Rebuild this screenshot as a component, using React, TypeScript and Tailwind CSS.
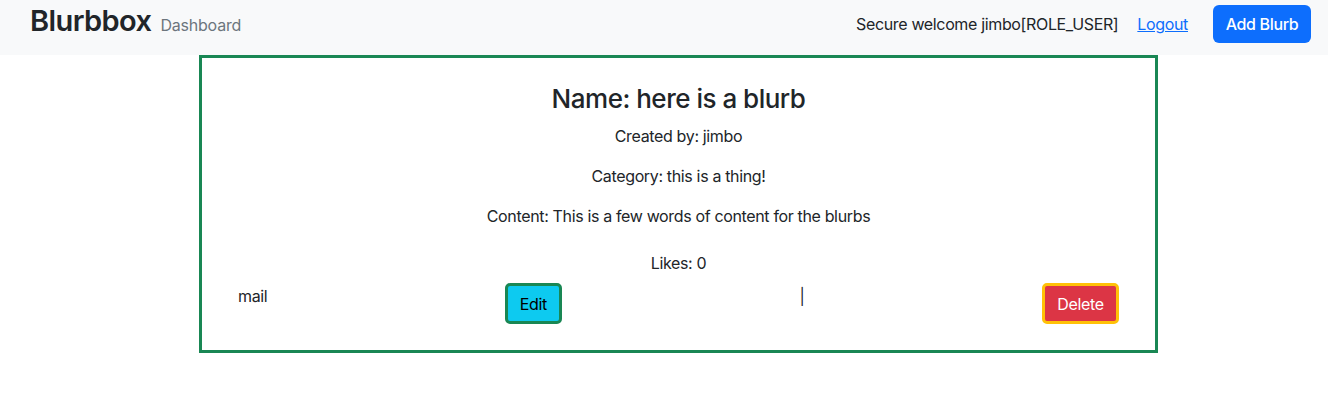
import React from "react";

export default function App() {
  return (
    <div className="min-h-[417px] bg-white text-[#212529] font-['Inter',sans-serif] text-[16px] leading-[24px] tracking-[-0.35px]">
      <nav className="h-[55px] bg-[#f8f9fa] flex items-center pl-[30px] pr-[17px] pb-[7px]">
        <div className="flex items-baseline -mt-[6px]">
          <span className="text-[29px] leading-[36px] font-semibold tracking-[-0.6px]">Blurbbox</span>
          <span className="ml-[9px] text-[16px] text-[#6c757d] tracking-[-0.2px]">Dashboard</span>
        </div>
        <div className="ml-auto flex items-center">
          <span className="text-[16px]">Secure welcome jimbo[ROLE_USER]</span>
          <a href="#" className="ml-[19px] text-[#0d6efd] underline">Logout</a>
          <button className="ml-[25px] h-[38px] w-[98px] rounded-[6px] bg-[#0d6efd] text-white text-[16px] font-medium">Add Blurb</button>
        </div>
      </nav>
      <div className="pl-[199px]">
        <div className="w-[959px] h-[298px] border-[3px] border-[#198754] pt-[24px] pb-[26px] text-center">
          <h3 className="text-[26px] leading-[34px] font-medium mb-[8px] tracking-[-0.5px]">Name: here is a blurb</h3>
          <p className="mb-[16px]">Created by: jimbo</p>
          <p className="mb-[16px]">Category: this is a thing!</p>
          <p className="mb-[23px]">Content: This is a few words of content for the blurbs</p>
          <p className="mb-[8px]">Likes: 0</p>
          <div className="flex justify-between items-start pl-[36px] pr-[36px] text-left">
            <span className="mt-[1px]">mail</span>
            <button className="h-[41px] w-[57px] rounded-[5px] border-[3px] border-[#198754] bg-[#0dcaf0] text-black">Edit</button>
            <span className="mt-[1px] text-[#212529]">|</span>
            <button className="h-[41px] w-[77px] rounded-[5px] border-[3px] border-[#ffc107] bg-[#dc3545] text-white">Delete</button>
          </div>
        </div>
      </div>
    </div>
  );
}
